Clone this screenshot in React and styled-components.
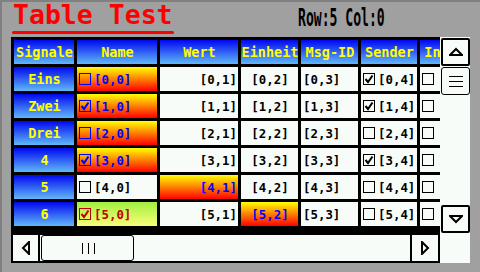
import React from "react";
import styled, { createGlobalStyle } from "styled-components";

const GlobalStyle = createGlobalStyle`
  html, body {
    margin: 0;
    padding: 0;
    background: #a0a0a0;
  }
  * {
    box-sizing: border-box;
  }
`;

const columns = ["Signale", "Name", "Wert", "Einheit", "Msg-ID", "Sender", "In"];

const rows = [
  { label: "Eins", nameChecked: false, nameLook: "hot", wertLook: "plain", einheitLook: "plain", sender: true },
  { label: "Zwei", nameChecked: true, nameLook: "hot", wertLook: "plain", einheitLook: "plain", sender: true },
  { label: "Drei", nameChecked: false, nameLook: "hot", wertLook: "plain", einheitLook: "plain", sender: false },
  { label: "4", nameChecked: true, nameLook: "hot", wertLook: "plain", einheitLook: "plain", sender: true },
  { label: "5", nameChecked: false, nameLook: "plain", wertLook: "hot", einheitLook: "plain", sender: false },
  { label: "6", nameChecked: true, nameLook: "lime", wertLook: "plain", einheitLook: "hot", sender: false },
];

const looks = {
  plain: { bg: "#f8fcf8", fg: "#000000", box: "#000000" },
  hot: { bg: "linear-gradient(#ffff00, #ff0000)", fg: "#0000ff", box: "#0000ff" },
  lime: { bg: "linear-gradient(#a0f040, #fcfc78)", fg: "#c00000", box: "#c00000" },
  head: { bg: "linear-gradient(#0008f0, #60b8f8)", fg: "#ffff00", box: "#ffff00" },
};

const Check = ({ checked, look = "plain" }) => (
  <Box $look={look}>
    {checked && (
      <svg width="10" height="10" viewBox="0 0 10 10">
        <path d="M1.5 5 L4 8 L8.5 1.5" fill="none" stroke={looks[look].box} strokeWidth="2" />
      </svg>
    )}
  </Box>
);

const Arrow = ({ dir }) => {
  const pts = {
    up: "1,8 7,2 13,8",
    down: "1,2 7,8 13,2",
    left: "8,1 2,7 8,13",
    right: "2,1 8,7 2,13",
  }[dir];
  const wide = dir === "up" || dir === "down";
  return (
    <svg width={wide ? 14 : 10} height={wide ? 10 : 14} viewBox={wide ? "0 0 14 10" : "0 0 10 14"}>
      <polygon points={pts} fill="none" stroke="#000" strokeWidth="2" strokeLinejoin="miter" />
    </svg>
  );
};

const Grip = ({ vertical }) =>
  vertical ? (
    <svg width="16" height="12" viewBox="0 0 16 12">
      <path d="M1 1.5 H15 M1 6.5 H15 M1 11.5 H15" stroke="#000" strokeWidth="1" />
    </svg>
  ) : (
    <svg width="14" height="11" viewBox="0 0 14 11">
      <path d="M1.5 0 V11 M7.5 0 V11 M13.5 0 V11" stroke="#000" strokeWidth="1" />
    </svg>
  );

export default function App() {
  return (
    <>
      <GlobalStyle />
      <Screen>
        <Header>
          <TitleBlock>
            <Title>Table Test</Title>
            <Underline />
          </TitleBlock>
          <Status>Row:5 Col:0</Status>
        </Header>
        <Widget>
          <TableArea>
            {columns.map((c) => (
              <Cell key={c} $look="head" $align="center" $head>
                {c}
              </Cell>
            ))}
            {rows.map((r, i) => (
              <React.Fragment key={r.label}>
                <Cell $look="head" $align="center" $head>
                  {r.label}
                </Cell>
                <Cell $look={r.nameLook} $align="left">
                  <Check checked={r.nameChecked} look={r.nameLook} />
                  <span>[{i},0]</span>
                </Cell>
                <Cell $look={r.wertLook} $align="right">
                  [{i},1]
                </Cell>
                <Cell $look={r.einheitLook} $align="center">
                  [{i},2]
                </Cell>
                <Cell $look="plain" $align="left">
                  [{i},3]
                </Cell>
                <Cell $look="plain" $align="left">
                  <Check checked={r.sender} />
                  <span>[{i},4]</span>
                </Cell>
                <Cell $look="plain" $align="left">
                  <Check checked={false} />
                </Cell>
              </React.Fragment>
            ))}
          </TableArea>
          <VScroll>
            <ScrollButton $h={28}>
              <Arrow dir="up" />
            </ScrollButton>
            <Thumb $vertical>
              <Grip vertical />
            </Thumb>
            <Track />
            <ScrollButton $h={28}>
              <Arrow dir="down" />
            </ScrollButton>
          </VScroll>
          <HScroll>
            <SideButton>
              <Arrow dir="left" />
            </SideButton>
            <Thumb>
              <Grip />
            </Thumb>
            <Track />
            <SideButton $right>
              <Arrow dir="right" />
            </SideButton>
          </HScroll>
          <Corner />
        </Widget>
      </Screen>
    </>
  );
}

const Screen = styled.div`
  width: 480px;
  height: 272px;
  background: #a0a0a0;
  border-top: 2px solid #808080;
  border-left: 2px solid #808080;
  overflow: hidden;
`;

const Header = styled.div`
  height: 35px;
  display: grid;
  grid-template-columns: 286px auto;
  padding-left: 10px;
`;

const TitleBlock = styled.div`
  display: flex;
  flex-direction: column;
  align-items: flex-start;
`;

const Title = styled.div`
  font-family: "DejaVu Sans Mono", monospace;
  font-weight: bold;
  font-size: 26.5px;
  line-height: 26px;
  color: #ff0000;
  padding-left: 1px;
`;

const Underline = styled.div`
  width: 162px;
  height: 3px;
  margin-top: 3px;
  border-radius: 2px;
  background: #ff0000;
`;

const Status = styled.div`
  font-family: "DejaVu Sans Mono", monospace;
  font-weight: bold;
  font-size: 24.7px;
  line-height: 24px;
  margin-top: 4px;
  color: #000;
  white-space: nowrap;
  transform: scaleX(0.53);
  transform-origin: left top;
`;

const Widget = styled.div`
  margin-left: 9px;
  width: 459px;
  height: 226px;
  display: grid;
  grid-template-columns: 429px 30px;
  grid-template-rows: 196px 30px;
`;

const TableArea = styled.div`
  background: #000;
  overflow: hidden;
  padding: 3px 0 0 3px;
  display: grid;
  grid-template-columns: 60px 80px 78px 57px 57px 56px 24px;
  grid-auto-rows: 24px;
  gap: 3px;
`;

const Cell = styled.div`
  display: flex;
  align-items: center;
  justify-content: ${(p) =>
    p.$align === "center" ? "center" : p.$align === "right" ? "flex-end" : "flex-start"};
  gap: 3px;
  padding: 0 1px 0 2px;
  background: ${(p) => looks[p.$look].bg};
  color: ${(p) => looks[p.$look].fg};
  font-family: "DejaVu Sans Mono", monospace;
  font-weight: bold;
  font-size: ${(p) => (p.$head ? "13.5px" : "12.4px")};
  white-space: nowrap;
  overflow: hidden;
`;

const Box = styled.div`
  flex: none;
  width: 12px;
  height: 12px;
  border: 1px solid ${(p) => looks[p.$look].box};
  background: ${(p) => (p.$look === "plain" ? "#f8fcf8" : "transparent")};
  display: flex;
  align-items: center;
  justify-content: center;
`;

const VScroll = styled.div`
  background: #f8fcf8;
  padding: 1px 0 0 1px;
  display: flex;
  flex-direction: column;
`;

const ScrollButton = styled.div`
  height: ${(p) => p.$h}px;
  border: 2px solid #000;
  border-radius: 2px;
  background: #f8fcf8;
  display: flex;
  align-items: center;
  justify-content: center;
`;

const Thumb = styled.div`
  flex: none;
  ${(p) => (p.$vertical ? "height: 28px; margin-top: 1px;" : "width: 93px; margin-left: 1px;")}
  border: 1px solid #000;
  border-radius: 3px;
  background: #f8fcf8;
  display: flex;
  align-items: center;
  justify-content: center;
`;

const Track = styled.div`
  flex: 1;
`;

const HScroll = styled.div`
  background: #f8fcf8;
  border: 2px solid #000;
  display: flex;
`;

const SideButton = styled.div`
  width: ${(p) => (p.$right ? "28px" : "27px")};
  border-left: ${(p) => (p.$right ? "2px solid #000" : "none")};
  border-right: ${(p) => (p.$right ? "none" : "2px solid #000")};
  display: flex;
  align-items: center;
  justify-content: center;
`;

const Corner = styled.div`
  background: #f8fcf8;
`;
